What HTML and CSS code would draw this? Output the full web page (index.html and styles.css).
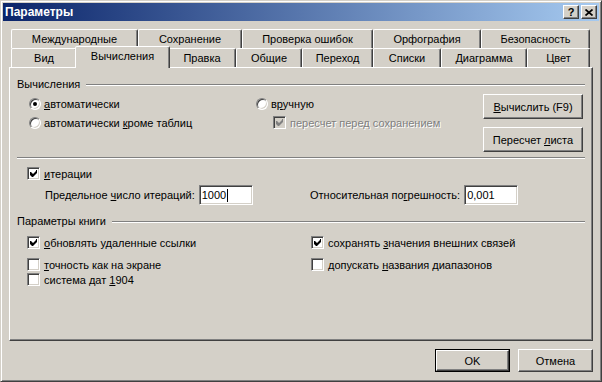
FILE: index.html
```html
<!doctype html>
<html lang="ru">

<head>
    <meta charset="utf-8">
    <title>Параметры</title>
    <link rel="stylesheet" href="styles.css">
</head>

<body>
    <div class="dlg">
        <div class="dlg-title">
            <span class="dlg-title-text">Параметры</span>
            <div class="dlg-title-btns">
                <span class="cap-btn cap-help">?</span>
                <span class="cap-btn">
                    <svg width="8" height="7" viewBox="0 0 8 7"><path d="M0.5 0.5 L7.5 6.5 M7.5 0.5 L0.5 6.5" stroke="#000" stroke-width="1.7" fill="none"/></svg>
                </span>
            </div>
        </div>

        <div class="dlg-body">
            <!-- вкладки -->
            <div class="tabs">
                <div class="tab-row tab-row-back">
                    <div class="tab">Международные</div>
                    <div class="tab">Сохранение</div>
                    <div class="tab">Проверка ошибок</div>
                    <div class="tab">Орфография</div>
                    <div class="tab">Безопасность</div>
                </div>
                <div class="tab-row tab-row-front">
                    <div class="tab">Вид</div>
                    <div class="tab tab-active">Вычисления</div>
                    <div class="tab">Правка</div>
                    <div class="tab">Общие</div>
                    <div class="tab">Переход</div>
                    <div class="tab">Списки</div>
                    <div class="tab">Диаграмма</div>
                    <div class="tab">Цвет</div>
                </div>
            </div>

            <div class="panel">
                <div class="grp-head">Вычисления</div>
                <div class="calc">
                    <div class="calc-col">
                        <div class="opt"><span class="radio radio-on"></span><span><u>а</u>втоматически</span></div>
                        <div class="opt"><span class="radio"></span><span>автоматически <u>к</u>роме таблиц</span></div>
                    </div>
                    <div class="calc-col">
                        <div class="opt"><span class="radio"></span><span>в<u>р</u>учную</span></div>
                        <div class="opt opt-sub opt-dis">
                            <span class="check check-dis"><svg width="7" height="7" viewBox="0 0 7 7"><polygon points="0,2 1,2 3,4 6,1 6,0 7,0 7,3 3,7 2,7 0,5" fill="#808080"/></svg></span>
                            <span>пересчет перед сохранением</span>
                        </div>
                    </div>
                    <div class="calc-btns">
                        <span class="btn btn-wide"><span><u>В</u>ычислить (F9)</span></span>
                        <span class="btn btn-wide"><span>Пересчет <u>л</u>иста</span></span>
                    </div>
                </div>

                <div class="sep"></div>

                <div class="opt opt-iter">
                    <span class="check"><svg width="7" height="7" viewBox="0 0 7 7"><polygon points="0,2 1,2 3,4 6,1 6,0 7,0 7,3 3,7 2,7 0,5" fill="#000"/></svg></span>
                    <span><u>и</u>терации</span>
                </div>
                <div class="limits">
                    <div class="field">
                        <span>Предельное <u>ч</u>исло итераций:</span>
                        <span class="edit">1000<span class="caret"></span></span>
                    </div>
                    <div class="field">
                        <span>Относительная по<u>г</u>решность:</span>
                        <span class="edit">0,001</span>
                    </div>
                </div>

                <div class="grp-head grp-book">Параметры книги</div>
                <div class="book">
                    <div class="opt opt-small">
                        <span class="check"><svg width="7" height="7" viewBox="0 0 7 7"><polygon points="0,2 1,2 3,4 6,1 6,0 7,0 7,3 3,7 2,7 0,5" fill="#000"/></svg></span>
                        <span><u>о</u>бновлять удаленные ссылки</span>
                    </div>
                    <div class="opt opt-small">
                        <span class="check"><svg width="7" height="7" viewBox="0 0 7 7"><polygon points="0,2 1,2 3,4 6,1 6,0 7,0 7,3 3,7 2,7 0,5" fill="#000"/></svg></span>
                        <span>сохранять <u>з</u>начения внешних связей</span>
                    </div>
                    <div class="opt opt-small">
                        <span class="check"></span>
                        <span><u>т</u>очность как на экране</span>
                    </div>
                    <div class="opt opt-small">
                        <span class="check"></span>
                        <span>допускать <u>н</u>азвания диапазонов</span>
                    </div>
                    <div class="opt opt-small">
                        <span class="check"></span>
                        <span>система дат <u>1</u>904</span>
                    </div>
                </div>
            </div>

            <div class="dlg-footer">
                <span class="btn btn-default"><span class="btn-inner">OK</span></span>
                <span class="btn"><span>Отмена</span></span>
            </div>
        </div>
    </div>
</body>

</html>
```

FILE: styles.css
```css
html,
body {
    margin: 0;
    padding: 0;
    background-color: #d4d0c8;
}

body {
    font-family: "Liberation Sans", Arial, sans-serif;
    font-size: 11px;
    color: #000;
}

u {
    text-decoration: underline;
    text-underline-offset: 1px;
}

/* окно */
.dlg {
    box-sizing: border-box;
    width: 602px;
    height: 382px;
    display: flex;
    flex-direction: column;
    background-color: #d4d0c8;
    border: 1px solid;
    border-color: #d4d0c8 #404040 #404040 #d4d0c8;
    box-shadow: inset 1px 1px #fff, inset -1px -1px #808080;
    padding: 2px;
}

.dlg-title {
    height: 18px;
    flex: none;
    display: flex;
    align-items: center;
    justify-content: space-between;
    padding: 0 2px;
    background: linear-gradient(to right, #0a246a, #a6caf0);
}

.dlg-title-text {
    color: #fff;
    font-weight: bold;
    font-size: 12px;
}

.dlg-title-btns {
    display: flex;
    gap: 2px;
}

.cap-btn {
    box-sizing: border-box;
    width: 16px;
    height: 14px;
    display: flex;
    align-items: center;
    justify-content: center;
    background-color: #d4d0c8;
    border: 1px solid;
    border-color: #fff #404040 #404040 #fff;
    box-shadow: inset -1px -1px #808080;
    font-weight: bold;
    font-size: 11px;
    line-height: 12px;
}

.dlg-body {
    flex: 1;
    display: flex;
    flex-direction: column;
    padding: 8px 6px 7px 6px;
}

/* вкладки */
.tabs {
    margin: 0 3px 0 2px;
}

.tab-row {
    display: flex;
}

.tab {
    flex: none;
    box-sizing: border-box;
    height: 19px;
    padding: 0 2px;
    line-height: 18px;
    text-align: center;
    white-space: nowrap;
    border: 1px solid;
    border-bottom: 0;
    border-color: #fff #404040 transparent #fff;
    border-radius: 2px 2px 0 0;
    box-shadow: inset -1px 0 #808080;
}

.tab-row-back .tab:nth-child(1) { width: 127px; }
.tab-row-back .tab:nth-child(2) { width: 104px; }
.tab-row-back .tab:nth-child(3) { width: 131px; }
.tab-row-back .tab:nth-child(4) { width: 108px; }
.tab-row-back .tab:nth-child(5) { width: 109px; }

.tab-row-front .tab:nth-child(1) { width: 66px; }
.tab-row-front .tab:nth-child(2) { width: 95px; }
.tab-row-front .tab:nth-child(3) { width: 68px; }
.tab-row-front .tab:nth-child(4) { width: 66px; }
.tab-row-front .tab:nth-child(5) { width: 71px; }
.tab-row-front .tab:nth-child(6) { width: 68px; }
.tab-row-front .tab:nth-child(7) { width: 86px; }
.tab-row-front .tab:nth-child(8) { width: 63px; }

.tab-active {
    position: relative;
    z-index: 1;
    height: 22px;
    margin: -2px -2px -1px;
    line-height: 18px;
    background-color: #d4d0c8;
}

/* панель */
.panel {
    flex: 1;
    border: 1px solid;
    border-color: #fff #404040 #404040 #fff;
    box-shadow: inset -1px -1px #808080;
    padding: 10px 7px 0 7px;
}

.grp-head {
    display: flex;
    align-items: center;
    height: 13px;
    line-height: 13px;
}

.grp-head::after {
    content: "";
    flex: 1;
    margin-left: 6px;
    border-top: 1px solid #808080;
    border-bottom: 1px solid #fff;
}

.grp-book {
    margin-top: 10px;
}

.sep {
    border-top: 1px solid #808080;
    border-bottom: 1px solid #fff;
    margin-top: 5px;
}

.calc {
    display: grid;
    grid-template-columns: 227px 227px 100px;
    margin: 3px 0 0 12px;
}

.calc-btns {
    display: flex;
    flex-direction: column;
    gap: 8px;
}

.opt {
    display: flex;
    align-items: center;
    height: 19px;
    white-space: nowrap;
}

.opt-small {
    height: 15px;
}

.opt-sub {
    margin-left: 17px;
}

.opt-dis {
    color: #808080;
    text-shadow: 1px 1px #fff;
}

.opt-iter {
    margin: 5px 0 0 10px;
}

.radio {
    box-sizing: border-box;
    width: 12px;
    height: 12px;
    flex: none;
    margin-right: 3px;
    border-radius: 50%;
    background-color: #fff;
    border: 1px solid;
    border-color: #808080 #fff #fff #808080;
    box-shadow: inset 1px 1px #404040, inset -1px -1px #d4d0c8;
    display: flex;
    align-items: center;
    justify-content: center;
}

.radio-on::after {
    content: "";
    width: 4px;
    height: 4px;
    border-radius: 50%;
    background-color: #000;
}

.check {
    box-sizing: border-box;
    width: 13px;
    height: 13px;
    flex: none;
    margin-right: 4px;
    background-color: #fff;
    border: 1px solid;
    border-color: #808080 #fff #fff #808080;
    box-shadow: inset 1px 1px #404040, inset -1px -1px #d4d0c8;
    display: flex;
    align-items: center;
    justify-content: center;
}

.check svg {
    display: block;
}

.check-dis {
    background-color: #d4d0c8;
}

.limits {
    display: grid;
    grid-template-columns: 265px auto;
    margin: 2px 0 0 28px;
}

.field {
    display: flex;
    align-items: center;
    gap: 4px;
    height: 20px;
}

.edit {
    box-sizing: border-box;
    width: 54px;
    height: 20px;
    display: flex;
    align-items: center;
    padding: 0 2px;
    background-color: #fff;
    border: 1px solid;
    border-color: #808080 #fff #fff #808080;
    box-shadow: inset 1px 1px #404040, inset -1px -1px #d4d0c8;
}

.caret {
    width: 1px;
    height: 13px;
    margin-left: 1px;
    background-color: #000;
}

.book {
    display: grid;
    grid-template-columns: 284px auto;
    grid-template-rows: 22px 15px 15px;
    margin: 7px 0 0 10px;
}

/* кнопки */
.btn {
    box-sizing: border-box;
    width: 75px;
    height: 23px;
    display: flex;
    align-items: center;
    justify-content: center;
    white-space: nowrap;
    background-color: #d4d0c8;
    border: 1px solid;
    border-color: #fff #404040 #404040 #fff;
    box-shadow: inset -1px -1px #808080;
}

.btn-wide {
    width: 100px;
    height: 25px;
}

.btn-default {
    border: 1px solid #000;
    box-shadow: none;
    padding: 0;
}

.btn-inner {
    box-sizing: border-box;
    width: 100%;
    height: 100%;
    display: flex;
    align-items: center;
    justify-content: center;
    border: 1px solid;
    border-color: #fff #404040 #404040 #fff;
    box-shadow: inset -1px -1px #808080;
}

.dlg-footer {
    flex: none;
    display: flex;
    justify-content: flex-end;
    gap: 8px;
    padding-top: 8px;
}
```
